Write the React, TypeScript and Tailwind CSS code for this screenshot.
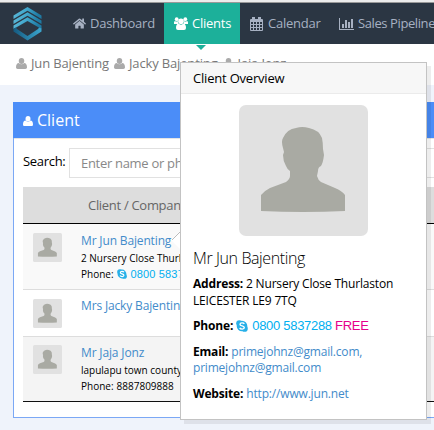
import React from "react";
import { FaHome } from "react-icons/fa";

const UserIcon = ({ className }: { className: string }) => (
  <svg viewBox="0 0 20 20" className={className} fill="currentColor">
    <ellipse cx="10" cy="5.4" rx="5" ry="5.4" />
    <path d="M5 9c-3 .3-5 2.700-5 8 0 2 1.300 3 3 3h14c1.700 0 3-1 3-3 0-5.300-2-7.700-5-8-1.300 1.500-3 2.300-5 2.300S6.300 10.500 5 9z" />
  </svg>
);

const UsersIcon = () => (
  <svg viewBox="0 0 14 13" className="h-[13px] w-[14px]" fill="currentColor">
    <circle cx="2.700" cy="2.200" r="1.900" />
    <circle cx="11.300" cy="2.200" r="1.900" />
    <circle cx="7" cy="4.200" r="2.800" />
    <path d="M0 7V5.500Q0 4 1 4 2.500 5 4 4 3.600 6 4.600 7zM14 7V5.500Q14 4 13 4 11.500 5 10 4 10.400 6 9.400 7z" />
    <path d="M4.300 6.500Q7 8.800 9.700 6.500 12 7 12 11q0 2-2 2H4q-2 0-2-2 0-4 2.300-4.500z" />
  </svg>
);

const Avatar = ({ className }: { className: string }) => (
  <svg viewBox="0 0 129 131" preserveAspectRatio="none" className={className}>
    <rect width="129" height="131" rx="7" fill="#e1e1e1" />
    <path
      fill="#a9aaa3"
      d="M22 106V90Q25 86 31 83L47 77Q51 74 51 71V66Q48 64 47 61Q44 56 44 50L45 47L44 43Q42 36 44 33Q48 24 57 23Q63 21 70 23Q80 25 83 33Q84 38 84 44L85 50Q84 58 82 61Q79 62 79 66L78 71Q79 75 82 77L96 83Q103 86 106 90V106Q64 108 22 106Z"
    />
  </svg>
);

const Skype = ({ className }: { className: string }) => (
  <svg viewBox="0 0 12 12" className={className}>
    <circle cx="6" cy="6" r="5.300" fill="#28b0e8" />
    <circle cx="3.300" cy="3.300" r="3.100" fill="#28b0e8" />
    <circle cx="8.700" cy="8.700" r="3.100" fill="#28b0e8" />
    <path d="M8.300 4C7.600 2.500 4 2.500 4 4.400 4 6.300 8.300 5.500 8.300 7.600 8.300 9.600 4.500 9.500 3.700 7.900" fill="none" stroke="#fff" strokeWidth="1.400" />
  </svg>
);

const Logo = () => (
  <svg viewBox="0 0 29 34" className="h-[34px] w-[29px]">
    <defs>
      <linearGradient id="logo" x1="0" y1="0" x2="1" y2="0.300">
        <stop offset="0" stopColor="#6cc3de" />
        <stop offset="0.500" stopColor="#3fa6cc" />
        <stop offset="1" stopColor="#1f7aa3" />
      </linearGradient>
      <linearGradient id="base" x1="0" y1="0" x2="1" y2="0">
        <stop offset="0" stopColor="#155a80" />
        <stop offset="1" stopColor="#3ba6cf" />
      </linearGradient>
    </defs>
    <g fill="url(#logo)">
      <path d="M0.500 8.500 14.500 0 28.500 8.500V12L14.500 3.700 0.500 12Z" />
      <path d="M0.500 13.500 14.500 5.200 28.500 13.500V17L14.500 8.700 0.500 17Z" />
      <path d="M0.500 18.500 14.500 10.200 28.500 18.500V22L14.500 14 0.500 22Z" />
    </g>
    <path fill="url(#base)" d="M0.500 24.500V21.500L3 20.500 4 22 14.500 29 25 22 26 20.500 28.500 21.500V24.500L14.500 33.500Z" />
  </svg>
);

const Calendar = () => (
  <svg viewBox="0 0 13 14" className="h-[14px] w-[13px]">
    <path fill="#a7b1c2" fillRule="evenodd" d="M1 2h1V0h3v2h3V0h3v2h1q1 0 1 1v10q0 1-1 1H1q-1 0-1-1V3q0-1 1-1zM1 5v2h2V5zm3 0v2h2V5zm3 0v2h2V5zm3 0v2h2V5zM1 8v2h2V8zm3 0v2h2V8zm3 0v2h2V8zm3 0v2h2V8zM1 11v2h2v-2zm3 0v2h2v-2zm3 0v2h2v-2zm3 0v2h2v-2z" />
  </svg>
);

const Chart = () => (
  <svg viewBox="0 0 15 12" className="h-[12px] w-[15px]">
    <path fill="#a7b1c2" d="M0 0h1v11h14v1H0zM3 6h2v4H3zM6 2h2v8H6zM9 4h2v6H9zM12 1h2v9h-2z" />
  </svg>
);

const rows = [
  { name: "Mr Jun Bajenting", address: "2 Nursery Close Thurlaston", phone: "0800 5837288", skype: true, box: "h-[66px] bg-[#f9f9f9] border-b border-[#ddd] pt-[9px]", text: "mt-0" },
  { name: "Mrs Jacky Bajenting", address: "", phone: "", skype: false, box: "h-[47px] bg-white border-b border-[#ddd] pt-[9px]", text: "-mt-px" },
  { name: "Mr Jaja Jonz", address: "lapulapu town county", phone: "8887809888", skype: false, box: "h-[65px] bg-[#f4f4f4] border-b border-[#111] pt-[8px]", text: "mt-0" },
];

export default function App() {
  return (
    <div className="relative h-[430px] w-[434px] overflow-hidden bg-[#eff3fb] font-['Open_Sans',sans-serif] text-[13px] text-black">
      <div className="w-[620px]">
        <div className="h-[3px] border-b border-[#999] bg-[#ececec]" />
        <nav className="flex h-[41px] bg-[#2b3643] text-[13px] tracking-[-0.25px] text-[#a7b1c2]">
          <div className="w-[60px] pt-[4px] pl-[13px]"><Logo /></div>
          <a className="flex w-[104px] items-center gap-[4px] pl-[13px]"><FaHome className="size-[13px]" />Dashboard</a>
          <a className="relative flex w-[76px] items-center gap-[4px] bg-[#1cb09a] pl-[10px] text-white">
            <UsersIcon />Clients
            <svg viewBox="0 0 10 5" className="absolute top-[42px] left-[32px] h-[5px] w-[10px]"><path d="M0 0h10L5 5z" fill="#1cb09a" /></svg>
          </a>
          <a className="flex w-[89px] items-center gap-[5px] pl-[10px]"><Calendar />Calendar</a>
          <a className="flex items-center gap-[4px] pl-[10px] tracking-[-0.400px]"><Chart />Sales Pipeline</a>
        </nav>
        <div className="flex h-[41px] gap-[5px] bg-white pt-[9px] pl-[16px] leading-[20px] tracking-[-0.15px] text-[#777]">
          {["Jun Bajenting", "Jacky Bajenting", "Jaja Jonz"].map((name) => (
            <span key={name} className="flex h-5 items-center gap-[5px]"><UserIcon className="size-[11px] -mr-px text-[#aaa]" />{name}</span>
          ))}
        </div>

        <section className="mt-[17px] ml-[13px] h-[316px] border border-[#7ba8f5] bg-white">
          <h2 className="-mx-px -mt-px flex h-[36px] items-center gap-[4px] bg-[#4b8df8] pl-[10px] text-[16px] text-white"><UserIcon className="mt-[2px] size-[10px]" />Client</h2>
          <div className="flex h-[49px] border-t border-[#e5e5e5] pt-[9px] pl-[9px] tracking-[-0.3px]">
            <label className="w-[46px] pt-[3px] leading-[20px]">Search:</label>
            <div className="h-[30px] w-[480px] border border-[#e1e1e1] pl-[11px] leading-[28px] text-[#888]">Enter name or phone</div>
          </div>
          <div className="ml-[9px]">
            <div className="h-[37px] border-b border-black bg-[#ddd] pl-[65px] leading-[36px] tracking-[-0.3px] text-[#666]">Client / Company</div>
            {rows.map((row) => (
              <div key={row.name} className={`flex pl-[10px] ${row.box}`}>
                <Avatar className="size-[29px]" />
                <div className={`ml-[19px] text-[10px] leading-[16px] ${row.text}`}>
                  <div className="h-[17px] text-[12px] leading-[16px] tracking-[-0.15px] text-[#428bca]">{row.name}</div>
                  <div>{row.address}</div>
                  {row.phone && (
                    <div className="flex items-center">Phone:{row.skype ? <><Skype className="mr-[4px] ml-[3px] size-[10px]" /><span className="font-['Liberation_Sans',sans-serif] text-[11px] tracking-[0.15px] text-[#00aff0]">{row.phone}</span></> : <span className="ml-[3px]">{row.phone}</span>}</div>
                  )}
                </div>
              </div>
            ))}
          </div>
        </section>
      </div>

      <svg viewBox="0 0 10 20" className="absolute top-[230px] left-[171px] h-[20px] w-[10px]"><path d="M10 0 0 10 10 20z" fill="#fff" /><path d="M10 1 1 10" stroke="#bbb" fill="none" /></svg>
      <aside className="absolute top-[62px] left-[180px] h-[358px] w-[247px] border border-[#c3c3c3] bg-white shadow-[4px_4px_0_rgba(0,0,0,0.07)]">
        <h3 className="h-[31px] border-b border-[#ebebeb] bg-[#f7f7f7] pl-[12px] leading-[30px] tracking-[-0.2px]">Client Overview</h3>
        <Avatar className="mt-[11px] ml-[58px] h-[131px] w-[129px]" />
        <div className="pl-[12px] leading-[17px] tracking-[-0.17px]">
          <h4 className="mt-[11px] h-[22px] text-[16px] leading-[22px] font-light tracking-[-0.4px]">Mr Jun Bajenting</h4>
          <p className="mt-[6px] text-[12px]"><b>Address:</b> 2 Nursery Close Thurlaston<br />LEICESTER LE9 7TQ</p>
          <p className="mt-[8px] flex items-center text-[12px]"><b>Phone:</b><Skype className="mr-[4px] ml-[3px] size-[12px]" /><span className="font-['Liberation_Sans',sans-serif] text-[13px] tracking-[-0.3px] text-[#00aff0]">0800 5837288 <span className="text-[#e6008c]">FREE</span></span></p>
          <p className="mt-[10px] text-[12px] leading-[16px] tracking-[-0.2px]"><b>Email:</b> <span className="text-[#428bca]">primejohnz@gmail.com,<br />primejohnz@gmail.com</span></p>
          <p className="mt-[9px] text-[12px]"><b>Website:</b> <span className="text-[#428bca]">http://www.jun.net</span></p>
        </div>
      </aside>
    </div>
  );
}
